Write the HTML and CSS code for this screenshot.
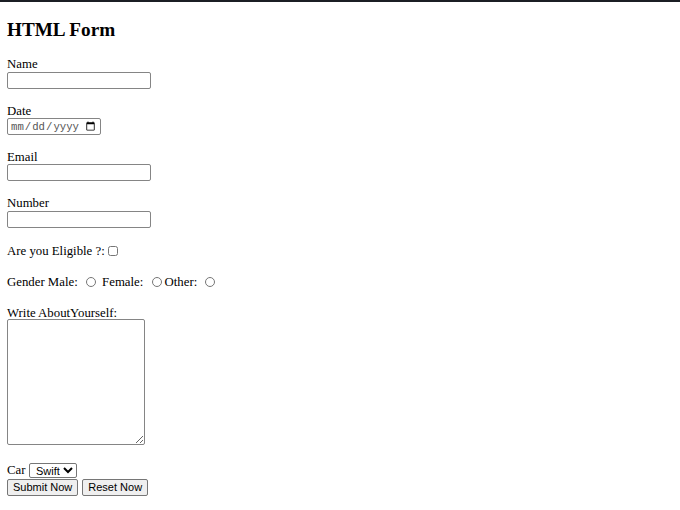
FILE: index.html
```html
<!DOCTYPE html>
<html>
<head>
<meta charset="utf-8">
<title>HTML Form</title>
<link rel="stylesheet" href="styles.css">
</head>
<body>
<div class="topbar"></div>
<main class="page">
  <h2 class="title">HTML Form</h2>
  <form class="form">
    <div class="field">
      <label class="label" for="name">Name</label>
      <input class="text" id="name" type="text">
    </div>
    <div class="field">
      <label class="label" for="date">Date</label>
      <input class="date" id="date" type="date">
    </div>
    <div class="field">
      <label class="label" for="email">Email</label>
      <input class="text" id="email" type="email">
    </div>
    <div class="field field-last">
      <label class="label" for="num">Number</label>
      <input class="text" id="num" type="number">
    </div>
    <div class="line">Are you Eligible ?:<input class="check" type="checkbox"></div>
    <div class="line">Gender Male: <input class="radio" type="radio" name="g"> Female: <input class="radio" type="radio" name="g">Other: <input class="radio" type="radio" name="g"></div>
    <div class="field-area">
      <label class="label" for="about">Write AboutYourself:</label>
      <textarea class="area" id="about"></textarea>
    </div>
    <div class="car">Car <select class="select"><option>Swift</option><option>Baleno</option></select></div>
    <div class="buttons">
      <button class="btn" type="submit">Submit Now</button>
      <button class="btn" type="reset">Reset Now</button>
    </div>
  </form>
</main>
</body>
</html>
```

FILE: styles.css
```css
html, body {
  margin: 0;
  padding: 0;
  background: #fff;
}
body {
  font-family: "Liberation Serif", "Times New Roman", serif;
  font-size: 12.8px;
  line-height: 14.7px;
  color: #000;
}
.topbar {
  height: 2px;
  background: #1b1e24;
}
.page {
  padding: 0 7px;
}
.title {
  font-size: 19.2px;
  line-height: 22px;
  font-weight: bold;
  margin: 16.5px 0 16.8px 0;
}
.form {
  margin: 0;
}
.label {
  display: block;
  height: 14.7px;
}
.field {
  margin-bottom: 14.7px;
}
.field-last {
  margin-bottom: 16.7px;
}
.text, .date {
  display: block;
  box-sizing: border-box;
  height: 17px;
  margin: 0;
  padding: 1px 2px;
  font-family: "Liberation Sans", Arial, sans-serif;
  font-size: 10.67px;
  border: 1px solid #858585;
  border-radius: 2px;
  background: #fff;
}
.text {
  width: 144px;
}
.date {
  width: 94px;
  height: 16.5px;
  color: #555;
  font-family: "Liberation Mono", "DejaVu Sans Mono", monospace;
  padding: 0 2px;
}
.line {
  height: 15px;
  margin-bottom: 16px;
  white-space: nowrap;
}
.check {
  width: 10px;
  height: 10px;
  margin: 0 0 0 3.5px;
  vertical-align: -1px;
}
.radio {
  width: 10px;
  height: 10px;
  margin: 0 3px 0 5px;
  vertical-align: -1px;
}
.field-area .label {
  height: 12.5px;
}
.area {
  display: block;
  box-sizing: border-box;
  width: 138px;
  height: 126.5px;
  margin: 0;
  border: 1px solid #858585;
  border-radius: 2px;
}
.car {
  margin-top: 17.5px;
  height: 16px;
  display: flex;
  align-items: center;
  gap: 3.5px;
}
.select {
  box-sizing: border-box;
  width: 48px;
  height: 15px;
  padding: 0 0 0 2px;
  font-family: "Liberation Sans", Arial, sans-serif;
  font-size: 11px;
  border: 1px solid #767676;
  border-radius: 2px;
  background: #fff;
  color: #000;
}
.buttons {
  display: flex;
  gap: 4px;
}
.btn {
  box-sizing: border-box;
  height: 17px;
  margin: 0;
  padding: 0 5px;
  font-family: "Liberation Sans", Arial, sans-serif;
  font-size: 11px;
  color: #000;
  background: #efefef;
  border: 1px solid #767676;
  border-radius: 2px;
}
```
